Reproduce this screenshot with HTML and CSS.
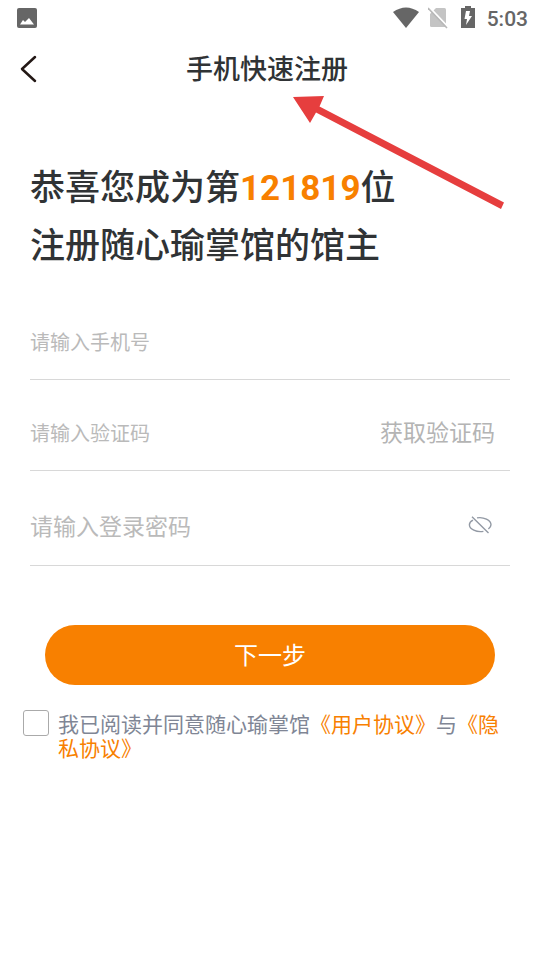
FILE: index.html
```html
<!DOCTYPE html>
<html lang="zh-CN">
<head>
<meta charset="utf-8">
<meta name="viewport" content="width=device-width, initial-scale=1">
<title>手机快速注册</title>
<link rel="stylesheet" href="styles.css">
</head>
<body>
<div class="status-bar">
  <svg class="status-picture" width="20" height="20" viewBox="0 0 20 20" aria-hidden="true">
    <rect width="20" height="20" rx="2" fill="#666"/>
    <path d="M3 16.500l3-4.500 2 2 4-4 5 6.500z" fill="#fff"/>
  </svg>
  <div class="status-right">
    <svg width="26" height="22" viewBox="0 0 26 22" aria-hidden="true">
      <path d="M0 5Q13-4 26 5L13 21z" fill="#666"/>
    </svg>
    <svg class="status-sim" width="20" height="22" viewBox="0 0 20 22" aria-hidden="true">
      <path d="M8 1h8.500q1.500 0 1.500 1.500V20H3.500Q2 20 2 18.500V7z" fill="#c4c4c4"/>
      <path d="M1 0L20 20" stroke="#fff" stroke-width="2"/>
      <path d="M0 1L19 21" stroke="#b8b8b8" stroke-width="1.600"/>
    </svg>
    <svg class="status-battery" width="14" height="22" viewBox="0 0 14 22" aria-hidden="true">
      <path d="M4 0h6v2h4v20H0V2h4z" fill="#666"/>
      <path d="M9 5H5L3.500 13H6L5 19L11 10H8z" fill="#fff"/>
    </svg>
    <span class="clock">5:03</span>
  </div>
</div>

<header class="nav">
  <button class="back" type="button" aria-label="返回">
    <svg width="18" height="28" viewBox="0 0 18 28" aria-hidden="true">
      <path d="M15 2L2 14l13 12" fill="none" stroke="#231815" stroke-width="2.500" stroke-linecap="round" stroke-linejoin="round"/>
    </svg>
  </button>
  <h1 class="nav-title">手机快速注册</h1>
  <svg class="arrow" width="212" height="116" viewBox="0 0 212 116" aria-hidden="true">
    <path d="M0 3L31 2 26.500 12.500 211 108.500 208 115 23 18.500 17 29z" fill="#e63e3e"/>
  </svg>
</header>

<main class="content">
  <h2 class="welcome">恭喜您成为第<span class="count">121819</span>位<br>注册随心瑜掌馆的馆主</h2>
  <form class="form">
    <div class="field">
      <input class="input" type="tel" placeholder="请输入手机号" aria-label="手机号">
    </div>
    <div class="field">
      <input class="input" type="text" placeholder="请输入验证码" aria-label="验证码">
      <button class="get-code" type="button">获取验证码</button>
    </div>
    <div class="field field-password">
      <input class="input" type="password" placeholder="请输入登录密码" aria-label="登录密码">
      <button class="toggle" type="button" aria-label="显示密码">
        <svg width="24" height="18" viewBox="0 0 24 18" fill="none" stroke="#9299a4" stroke-width="1.400" aria-hidden="true">
          <path d="M9 1.900C15.500.500 23 4.500 23 8.700c0 1.600-1 3-2.600 4.300M5 4.100C2.700 5.300 1.400 7 1.400 8.700c0 4.500 7 7.900 14 6.700M4 .700L20.500 17"/>
        </svg>
      </button>
    </div>
    <button class="next" type="submit">下一步</button>
    <div class="agreement">
      <input class="check" id="agree" type="checkbox">
      <p class="terms"><label for="agree">我已阅读并同意随心瑜掌馆</label><a href="#terms">《用户协议》</a>与<a href="#privacy">《隐私协议》</a></p>
    </div>
  </form>
</main>
</body>
</html>
```
FILE: styles.css
```css
* {
  box-sizing: border-box;
}

body {
  margin: 0;
  background: #fff;
  color: #303335;
  font-family: Roboto, "Noto Sans CJK SC", sans-serif;
}

button,
input {
  margin: 0;
  padding: 0;
  border: 0;
  background: none;
  font-family: inherit;
}

svg {
  display: block;
}

.status-bar {
  display: flex;
  align-items: center;
  justify-content: space-between;
  height: 36px;
  padding: 0 12px 0 17px;
}

.status-right {
  display: flex;
  align-items: center;
}

.status-sim {
  margin-left: 9px;
}

.status-battery {
  margin: 0 12px 2px 13px;
}

.clock {
  padding-top: 2px;
  color: #666;
  font-size: 21px;
  font-weight: 500;
  line-height: 24px;
}

.nav {
  position: relative;
  display: grid;
  grid-template-columns: 60px 1fr 60px;
  align-items: center;
  height: 66px;
}

.back {
  padding: 19px 20px;
}

.nav-title {
  grid-column: 2;
  margin: 0;
  padding: 2px 6px 0 0;
  font-size: 27px;
  font-weight: 500;
  line-height: 40px;
  text-align: center;
}

.arrow {
  position: absolute;
  top: 58px;
  left: calc(50% + 23px);
}

.content {
  padding: 58px 30px 30px;
}

.welcome {
  margin: 0 0 27px;
  font-size: 35px;
  font-weight: 500;
  line-height: 58px;
}

.count {
  color: #f88000;
  font-weight: 700;
}

.field {
  display: flex;
  align-items: center;
  height: 77px;
  margin-bottom: 14px;
  padding-top: 4px;
  border-bottom: 1px solid #d8d8d8;
}

.input {
  flex: 1;
  min-width: 0;
  height: 60px;
  outline: 0;
  color: #303335;
  font-size: 20px;
}

.input::placeholder {
  color: #bababa;
}

.get-code {
  padding-right: 15px;
  color: #b4b4b4;
  font-size: 23px;
  line-height: 36px;
}

.field-password {
  height: 81px;
  margin-bottom: 59px;
}

.field-password .input {
  font-size: 23px;
}

.toggle {
  padding: 10px 18px 14px;
}

.next {
  display: block;
  width: calc(100% - 30px);
  height: 60px;
  margin: 0 15px;
  padding-bottom: 4px;
  border-radius: 30px;
  background: #f88000;
  color: #fff;
  font-size: 24px;
}

.agreement {
  display: flex;
  align-items: flex-start;
  gap: 9px;
  margin: 25px 0 0 -7px;
}

.check {
  flex: none;
  width: 26px;
  height: 26px;
  border: 1px solid #aaa;
  border-radius: 3px;
  appearance: none;
}

.check:checked {
  background: #f88000;
}

.terms {
  margin: 3px 0 0;
  color: #808695;
  font-size: 21px;
  line-height: 24px;
}

.terms a {
  color: #f88000;
  text-decoration: none;
}
```
